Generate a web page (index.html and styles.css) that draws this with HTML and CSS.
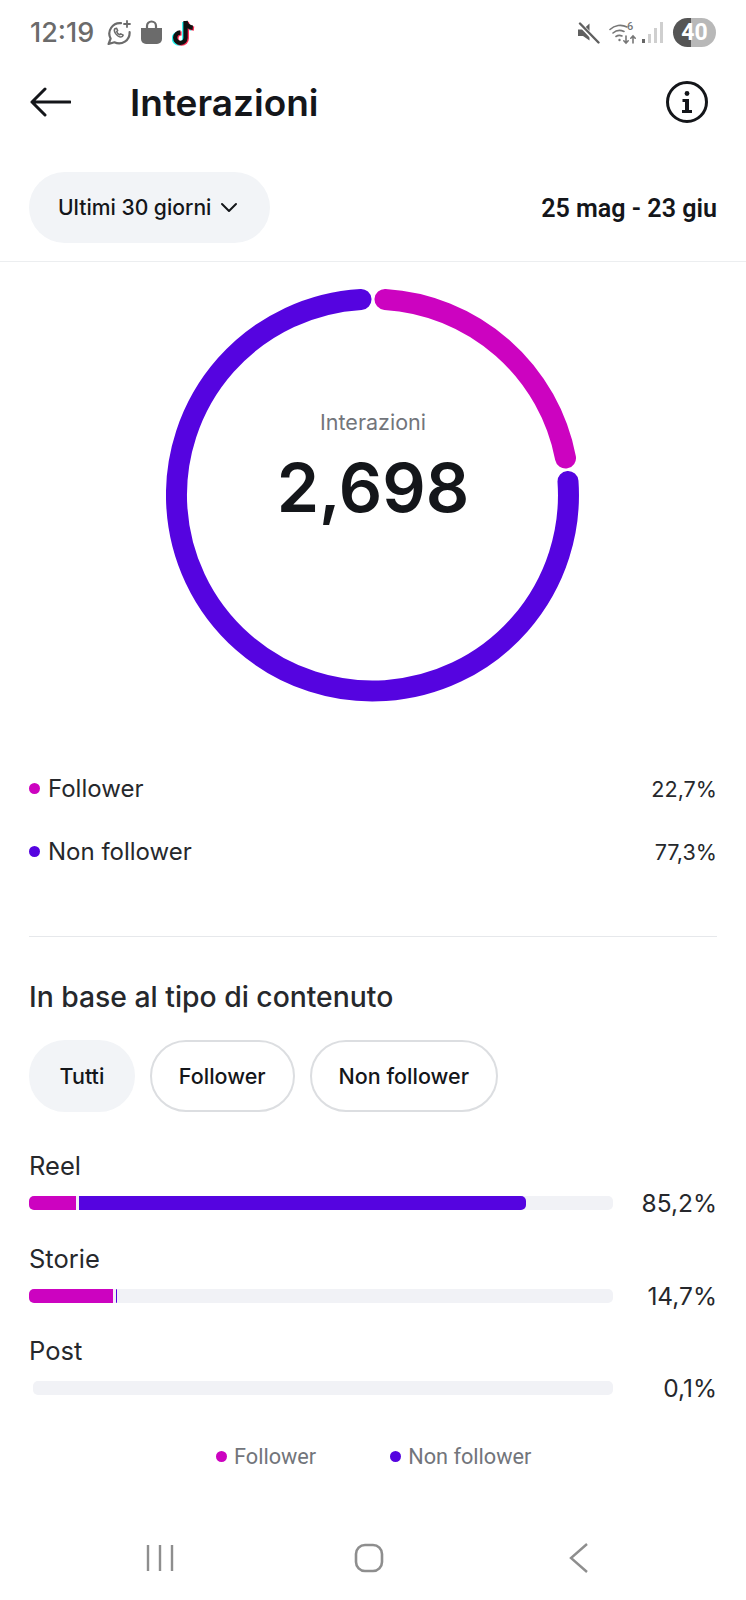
FILE: index.html
```html
<!DOCTYPE html>
<html>

<head>
  <meta charset="utf-8">
  <title>Interazioni</title>
  <meta name="viewport" content="width=device-width, initial-scale=1">
  <link rel="stylesheet" href="styles.css">
</head>

<body>
  <div id="phone">
    <div class="statusbar">
      <div class="status-left">
        <span class="clock">12:19</span>
        <svg class="ic-wa" width="26" height="26" viewBox="0 0 26 26" fill="none" stroke="#6b6b6b" stroke-width="2.2" stroke-linecap="round" stroke-linejoin="round">
          <path d="M15 3.1A10.6 10.6 0 0 0 4.6 18.6L2.6 24l5.8-1.7A10.6 10.6 0 0 0 23.6 12.2"/>
          <path d="M9 8.6c-1 1.2-.8 3 .6 5 1.5 2 3.4 3.4 5.2 3.4 1.2 0 2.2-.7 2.4-1.8l-2.5-1.4-1.2 1c-1-.4-2.3-1.700-2.800-3l1-1.200-1.200-2.400z" stroke-width="1.500"/>
          <path d="M21 1v6M18 4h6" stroke-width="1.800"/>
        </svg>
        <svg class="ic-bag" width="23" height="25" viewBox="0 0 23 25">
          <path d="M1 8h21v11a5 5 0 0 1-5 5H6a5 5 0 0 1-5-5z" fill="#6b6b6b"/>
          <path d="M7 9V6a4.500 4.500 0 0 1 9 0v3" fill="none" stroke="#6b6b6b" stroke-width="2.200"/>
        </svg>
        <svg class="ic-tt" width="25" height="29" viewBox="0 0 24 28" fill="none" stroke-width="4.200">
          <path d="M13 3v16a5 5 0 1 1-5-5M13 3c.4 3.600 3 6 7 6.400" stroke="#25f4ee" transform="translate(-1.200 .8)"/>
          <path d="M13 3v16a5 5 0 1 1-5-5M13 3c.4 3.600 3 6 7 6.400" stroke="#fe2c55" transform="translate(1.200 .8)"/>
          <path d="M13 3v16a5 5 0 1 1-5-5M13 3c.4 3.600 3 6 7 6.400" stroke="#111"/>
        </svg>
      </div>
      <div class="status-right">
        <svg width="23" height="22" viewBox="0 0 23 22">
          <path d="M1 7.500h5L12.500 1.500v17L6 14H1z" fill="#5f5f5f"/>
          <path d="M2 1l19 20" stroke="#fff" stroke-width="4.500"/>
          <path d="M3 1.500l18.500 19" stroke="#5f5f5f" stroke-width="2.400" stroke-linecap="round"/>
        </svg>
        <svg class="ic-wifi" width="28" height="24" viewBox="0 0 28 24" fill="none" stroke="#777" stroke-width="1.600" stroke-linecap="round">
          <path d="M1 8.500a15 15 0 0 1 17-2.500M4 12a10 10 0 0 1 11-1.500M7 15.500a6 6 0 0 1 6-.5"/>
          <circle cx="10.500" cy="19" r="1.200" fill="#777" stroke="none"/>
          <path d="M17 15v7M14.800 19.800l2.200 2.200 2.200-2.200M24 22v-7M21.800 17.200l2.200-2.200 2.200 2.200"/>
          <text x="18" y="9" class="wifi-six">6</text>
        </svg>
        <div class="signal">
          <span class="sig-1"></span><span class="sig-2"></span><span class="sig-3"></span><span class="sig-4"></span>
        </div>
        <div class="battery">40</div>
      </div>
    </div>

    <header class="topbar">
      <svg class="back" width="41" height="30" viewBox="0 0 41 30" fill="none" stroke="#14161a" stroke-width="3" stroke-linecap="round" stroke-linejoin="round">
        <path d="M40 15H2M15 2L2 15l13 13"/>
      </svg>
      <h1>Interazioni</h1>
      <svg class="info" width="42" height="42" viewBox="0 0 42 42">
        <circle cx="21" cy="21" r="19.500" fill="none" stroke="#14161a" stroke-width="3"/>
        <circle cx="21" cy="12.500" r="2.400" fill="#14161a"/>
        <path d="M16.500 18h6.500v11h3v3h-10v-3h3v-8h-2.500z" fill="#14161a"/>
      </svg>
    </header>

    <div class="filterbar">
      <div class="range-pill">
        Ultimi 30 giorni
        <svg width="18" height="11" viewBox="0 0 18 11" fill="none" stroke="#14161a" stroke-width="2" stroke-linecap="round" stroke-linejoin="round">
          <path d="M2 2l7 7 7-7"/>
        </svg>
      </div>
      <div class="dates">25 mag - 23 giu</div>
    </div>

    <div class="donut">
      <svg width="414" height="414" viewBox="0 0 414 414" fill="none" stroke-width="21" stroke-linecap="round">
        <path d="M195 11.400A196 196 0 1 0 402 193.500" stroke="#5504e0"/>
        <path d="M219 11.400A196 196 0 0 1 399.500 170" stroke="#cc03c0"/>
      </svg>
      <div class="donut-label">
        <span>Interazioni</span>
        <strong>2,698</strong>
      </div>
    </div>

    <section class="legend">
      <div class="legend-row">
        <span class="dot pink"></span>
        <span class="legend-name">Follower</span>
        <span class="legend-val">22,7%</span>
      </div>
      <div class="legend-row">
        <span class="dot violet"></span>
        <span class="legend-name">Non follower</span>
        <span class="legend-val">77,3%</span>
      </div>
    </section>

    <section class="breakdown">
      <h2>In base al tipo di contenuto</h2>
      <div class="chips">
        <span class="chip active">Tutti</span>
        <span class="chip">Follower</span>
        <span class="chip">Non follower</span>
      </div>

      <div class="bar-row">
        <div class="bar-main">
          <div class="bar-name">Reel</div>
          <div class="track">
            <span class="seg pink" style="width:47px"></span>
            <span class="seg violet" style="width:447px"></span>
          </div>
        </div>
        <div class="bar-val">85,2%</div>
      </div>
      <div class="bar-row">
        <div class="bar-main">
          <div class="bar-name">Storie</div>
          <div class="track">
            <span class="seg pink" style="width:84px"></span>
            <span class="seg violet" style="width:1px"></span>
          </div>
        </div>
        <div class="bar-val">14,7%</div>
      </div>
      <div class="bar-row">
        <div class="bar-main">
          <div class="bar-name">Post</div>
          <div class="track track-post"></div>
        </div>
        <div class="bar-val">0,1%</div>
      </div>

      <div class="key">
        <span class="key-item"><span class="dot small pink"></span>Follower</span>
        <span class="key-item"><span class="dot small violet"></span>Non follower</span>
      </div>
    </section>

    <nav class="navbar">
      <svg width="28" height="28" viewBox="0 0 28 28" stroke="#8e8e8e" stroke-width="2.400">
        <path d="M2 1v26M14 1v26M26 1v26"/>
      </svg>
      <svg class="nav-home" width="30" height="30" viewBox="0 0 30 30" fill="none" stroke="#8e8e8e" stroke-width="2.600">
        <rect x="2" y="2" width="26" height="26" rx="9"/>
      </svg>
      <svg width="20" height="30" viewBox="0 0 20 30" fill="none" stroke="#8e8e8e" stroke-width="2.400">
        <path d="M18 1L2 15l16 14"/>
      </svg>
    </nav>
  </div>
</body>

</html>
```

FILE: styles.css
```css
* {
  padding: 0px;
  margin: 0px;
  box-sizing: border-box;
}

body {
  background-color: #fff;
  font-family: Inter, "Liberation Sans", sans-serif;
  color: #14161a;
}

#phone {
  width: 746px;
  height: 1600px;
  overflow: hidden;
  display: flex;
  flex-direction: column;
}

.pink {
  background-color: #cc03c0;
}

.violet {
  background-color: #5504e0;
}

/* status bar */

.statusbar {
  height: 66px;
  padding: 18px 30px 0 30px;
  display: flex;
  justify-content: space-between;
  align-items: flex-start;
}

.status-left,
.status-right {
  display: flex;
  align-items: center;
  height: 29px;
}

.clock {
  font-family: Inter, sans-serif;
  font-size: 27px;
  font-weight: 500;
  color: #6b6b6b;
  margin-right: 12px;
}

.ic-bag {
  margin-left: 8px;
}

.ic-tt {
  margin-left: 9px;
}

.status-right {
  gap: 9px;
}

.ic-wifi {
  margin-right: -4px;
}

.wifi-six {
  font-family: Roboto, sans-serif;
  font-size: 11px;
  font-weight: 500;
  fill: #777;
  stroke: none;
}

.signal {
  display: flex;
  align-items: flex-end;
  gap: 3px;
  height: 21px;
}

.signal span {
  width: 3px;
  background-color: #cfcfcf;
}

.signal .sig-1 {
  height: 4px;
  background-color: #666;
}

.sig-2 {
  height: 9px;
}

.sig-3 {
  height: 15px;
}

.sig-4 {
  height: 21px;
}

.battery {
  width: 43px;
  height: 29px;
  margin-left: 1px;
  border-radius: 15px;
  background: linear-gradient(to right, #555 42%, #b8b8b8 42%);
  color: #fff;
  font-family: Roboto, sans-serif;
  font-size: 23px;
  font-weight: 700;
  line-height: 29px;
  text-align: center;
}

/* header */

.topbar {
  height: 72px;
  padding: 0 38px 0 30px;
  display: flex;
  align-items: center;
}

.back {
  margin-right: 59px;
}

.topbar h1 {
  flex: 1;
  font-size: 37px;
  font-weight: 600;
}

.filterbar {
  margin-top: 34px;
  padding: 0 29px 18px 29px;
  height: 90px;
  display: flex;
  justify-content: space-between;
  align-items: flex-start;
  border-bottom: 1px solid #eceef0;
}

.range-pill {
  width: 241px;
  height: 71px;
  padding-left: 29px;
  display: flex;
  align-items: center;
  gap: 9px;
  border-radius: 36px;
  background-color: #f2f4f7;
  font-size: 21.100px;
  font-weight: 500;
}

.dates {
  margin-top: 22px;
  font-family: Roboto, sans-serif;
  font-size: 25.100px;
  font-weight: 600;
}

/* donut */

.donut {
  position: relative;
  width: 414px;
  height: 414px;
  margin: 26px auto 0;
}

.donut svg {
  display: block;
}

.donut-label {
  position: absolute;
  left: 0;
  right: 0;
  top: 121px;
  text-align: center;
}

.donut-label span {
  display: block;
  font-size: 21.500px;
  color: #72757b;
}

.donut-label strong {
  display: block;
  margin-top: 10px;
  font-size: 68px;
  line-height: 84px;
  font-weight: 600;
}

/* follower split */

.legend {
  margin: 0 29px;
  padding-top: 55px;
  height: 235px;
  border-bottom: 1px solid #e6e8eb;
}

.legend-row {
  height: 63px;
  display: flex;
  align-items: center;
  font-size: 24px;
  color: #26282c;
}

.legend-val {
  font-size: 21.600px;
}

.dot {
  width: 11px;
  height: 11px;
  border-radius: 50%;
  margin-right: 8px;
}

.legend-name {
  flex: 1;
}

/* content type */

.breakdown {
  padding: 40px 29px 0 29px;
}

.breakdown h2 {
  font-size: 28.300px;
  line-height: 40px;
  font-weight: 500;
  color: #26282c;
}

.chips {
  margin-top: 23px;
  margin-bottom: 37px;
  display: flex;
  gap: 15px;
}

.chip {
  height: 72px;
  padding: 0 27px;
  display: flex;
  align-items: center;
  border: 2px solid #dcdee1;
  border-radius: 36px;
  font-size: 21.500px;
  font-weight: 500;
}

.chip.active {
  padding: 0 28.500px;
  border-color: #f2f4f7;
  background-color: #f2f4f7;
}

.bar-row {
  height: 92.500px;
  display: flex;
  align-items: flex-start;
}

.bar-main {
  width: 584px;
}

.bar-name {
  height: 47px;
  font-size: 25.500px;
  line-height: 34px;
  color: #26282c;
}

.track {
  height: 14px;
  display: flex;
  gap: 3px;
  border-radius: 5px;
  background-color: #f1f2f6;
}

.track-post {
  margin-left: 4px;
}

.seg {
  display: block;
  height: 14px;
}

.seg:first-child {
  border-radius: 5px 0 0 5px;
}

.seg:last-child {
  border-radius: 0 5px 5px 0;
}

.bar-val {
  flex: 1;
  padding-top: 39px;
  text-align: right;
  font-size: 24.500px;
  color: #26282c;
}

.key {
  margin-top: 17px;
  padding-left: 187px;
  display: flex;
  gap: 74px;
  font-family: Roboto, sans-serif;
  font-size: 21.700px;
  color: #72757b;
}

.key-item {
  display: flex;
  align-items: center;
}

.dot.small {
  margin-right: 7px;
}

/* android nav */

.navbar {
  margin-top: auto;
  padding: 0 157px 27px 146px;
  display: flex;
  justify-content: space-between;
  align-items: center;
}

.nav-home {
  margin-right: 6px;
}
```
